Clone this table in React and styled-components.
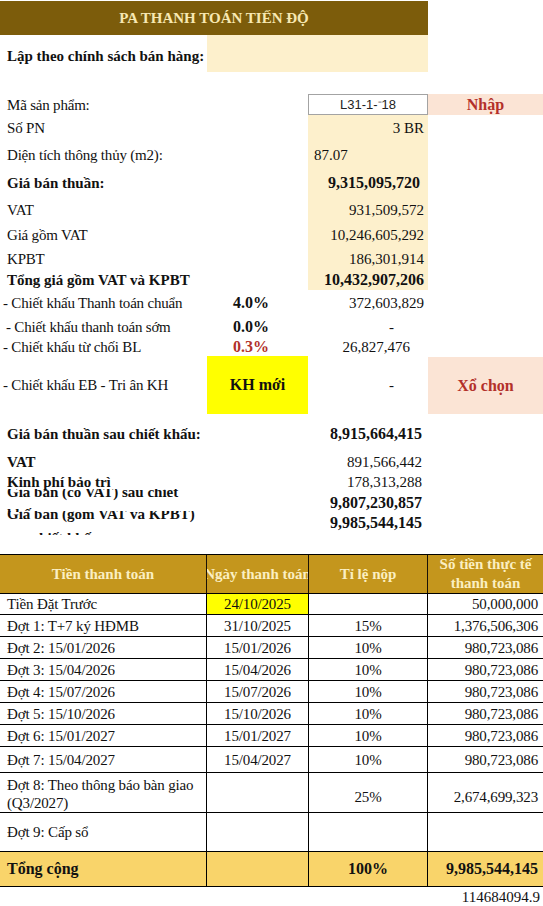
import React from "react";
import styled, { createGlobalStyle } from "styled-components";

const Global = createGlobalStyle`
  html, body { margin: 0; padding: 0; background: #ffffff; }
  body { font-family: "Liberation Serif", "Times New Roman", serif; color: #111; }
`;

const COLS = "207px 101px 120px 115px";
const TCOLS = "207px 102px 119px 115px";

const Sheet = styled.div`
  width: 543px;
  padding-top: 1px;
  font-size: 15px;
  line-height: 18px;
`;

const TitleBar = styled.div`
  width: 428px;
  height: 34px;
  background: #7c5c0b;
  color: #f7e8b2;
  font-weight: bold;
  font-size: 15px;
  display: flex;
  align-items: center;
  justify-content: center;
`;

const PolicyRow = styled.div`
  display: grid;
  grid-template-columns: 207px 221px;
  height: 37px;
  margin-bottom: 22px;
`;

const PolicyLabel = styled.div`
  font-weight: bold;
  font-size: 15px;
  padding-left: 7px;
  display: flex;
  align-items: center;
  padding-top: 4px;
  white-space: nowrap;
`;

const PolicyInput = styled.div`
  background: #fdf0cc;
`;

const Row = styled.div`
  display: grid;
  grid-template-columns: ${COLS};
  height: ${(p) => p.$h}px;
  margin-top: ${(p) => p.$mt || 0}px;
`;

const Label = styled.div`
  display: flex;
  align-items: center;
  padding-left: ${(p) => (p.$indent != null ? p.$indent : 7)}px;
  font-weight: ${(p) => (p.$bold ? "bold" : "normal")};
  white-space: nowrap;
  letter-spacing: ${(p) => (p.$bold ? "0" : "-0.2px")};
`;

const ClipLabel = styled.div`
  overflow: hidden;
  padding-left: 7px;
  font-weight: bold;
`;

const ClipText = styled.div`
  margin-top: ${(p) => p.$shift}px;
  line-height: ${(p) => p.$lh}px;
  width: 200px;
`;

const Pct = styled.div`
  display: flex;
  align-items: center;
  padding-left: 26px;
  font-weight: bold;
  font-size: 16px;
  color: ${(p) => (p.$red ? "#b2302a" : "#111")};
`;

const Promo = styled.div`
  background: #ffff00;
  display: flex;
  align-items: center;
  justify-content: center;
  font-weight: bold;
  font-size: 16px;
`;

const Value = styled.div`
  display: flex;
  align-items: center;
  justify-content: ${(p) => (p.$left ? "flex-start" : "flex-end")};
  padding: ${(p) => (p.$left ? "0 0 0 6px" : `0 ${p.$pr != null ? p.$pr : 4}px 0 0`)};
  padding-top: ${(p) => p.$dy || 0}px;
  background: ${(p) => (p.$cream ? "#fdf0cc" : "transparent")};
  font-weight: ${(p) => (p.$bold ? "bold" : "normal")};
  font-size: ${(p) => (p.$bold ? 16 : 15)}px;
`;

const CodeBox = styled.div`
  background: #fff;
  border: 1px solid #a3a3a3;
  display: flex;
  align-items: center;
  justify-content: center;
  font-family: "Liberation Sans", Arial, sans-serif;
  font-size: 13px;
  color: #222;
`;

const Smudge = styled.span`
  color: #9a9a9a;
  font-size: 10px;
  letter-spacing: -1px;
`;

const Action = styled.div`
  background: #fbe4d5;
  color: #b3302a;
  font-weight: bold;
  font-size: 16px;
  display: flex;
  align-items: center;
  justify-content: center;
  margin-top: ${(p) => p.$mt || 0}px;
`;

const Table = styled.div`
  margin-top: 19px;
  width: 543px;
`;

const TRow = styled.div`
  display: grid;
  grid-template-columns: ${TCOLS};
  height: ${(p) => p.$h}px;
  box-sizing: border-box;
  border-bottom: 1px solid #000;
  border-top: ${(p) => (p.$top ? "1px solid #000" : "none")};
  background: ${(p) => p.$bg || "transparent"};
`;

const TH = styled.div`
  border-right: ${(p) => (p.$last ? "none" : "1px solid #1a1206")};
  color: #fbefc2;
  font-weight: bold;
  font-size: 15px;
  overflow: hidden;
  display: flex;
  align-items: center;
  justify-content: center;
  text-align: center;
  line-height: 19px;
  white-space: ${(p) => (p.$nowrap ? "nowrap" : "normal")};
`;

const TD = styled.div`
  border-right: ${(p) => (p.$last ? "none" : "1px solid #000")};
  overflow: hidden;
  display: flex;
  flex-direction: column;
  justify-content: ${(p) => p.$valign || "center"};
  align-items: ${(p) =>
    p.$align === "right" ? "flex-end" : p.$align === "center" ? "center" : "flex-start"};
  padding: 0 ${(p) => (p.$align === "right" ? 5 : 0)}px 0 ${(p) => (p.$align === "left" || !p.$align ? 7 : 0)}px;
  padding-bottom: ${(p) => p.$pb || 0}px;
  padding-top: ${(p) => p.$ptop || 0}px;
  background: ${(p) => p.$bg || "transparent"};
  font-weight: ${(p) => (p.$bold ? "bold" : "normal")};
  font-size: ${(p) => (p.$bold ? 16 : 15)}px;
  letter-spacing: ${(p) => (p.$bold ? "0" : "-0.15px")};
  white-space: nowrap;
  line-height: 18px;
`;

const Footer = styled.div`
  height: 19px;
  display: flex;
  align-items: center;
  justify-content: flex-end;
  padding-right: 3px;
`;

const schedule = [
  { label: "Đợt 1: T+7 ký HĐMB", date: "31/10/2025", pct: "15%", amt: "1,376,506,306", h: 22 },
  { label: "Đợt 2: 15/01/2026", date: "15/01/2026", pct: "10%", amt: "980,723,086", h: 22 },
  { label: "Đợt 3: 15/04/2026", date: "15/04/2026", pct: "10%", amt: "980,723,086", h: 22 },
  { label: "Đợt 4: 15/07/2026", date: "15/07/2026", pct: "10%", amt: "980,723,086", h: 22 },
  { label: "Đợt 5: 15/10/2026", date: "15/10/2026", pct: "10%", amt: "980,723,086", h: 22 },
  { label: "Đợt 6: 15/01/2027", date: "15/01/2027", pct: "10%", amt: "980,723,086", h: 22 },
  { label: "Đợt 7: 15/04/2027", date: "15/04/2027", pct: "10%", amt: "980,723,086", h: 26 },
];

export default function App() {
  return (
    <>
      <Global />
      <Sheet>
        <TitleBar>PA THANH TOÁN TIẾN ĐỘ</TitleBar>
        <PolicyRow>
          <PolicyLabel>Lập theo chính sách bán hàng:</PolicyLabel>
          <PolicyInput />
        </PolicyRow>

        <Row $h={21}>
          <Label>Mã sản phẩm:</Label>
          <div />
          <CodeBox>
            L31-1-<Smudge>⁼⁻</Smudge>18
          </CodeBox>
          <Action>Nhập</Action>
        </Row>
        <Row $h={26}>
          <Label>Số PN</Label>
          <div />
          <Value $cream>3 BR</Value>
        </Row>
        <Row $h={27}>
          <Label>Diện tích thông thủy (m2):</Label>
          <div />
          <Value $cream $left>87.07</Value>
        </Row>
        <Row $h={29}>
          <Label $bold>Giá bán thuần:</Label>
          <div />
          <Value $cream $bold $pr={8}>9,315,095,720</Value>
        </Row>
        <Row $h={25}>
          <Label>VAT</Label>
          <div />
          <Value $cream>931,509,572</Value>
        </Row>
        <Row $h={26}>
          <Label>Giá gồm VAT</Label>
          <div />
          <Value $cream>10,246,605,292</Value>
        </Row>
        <Row $h={22}>
          <Label>KPBT</Label>
          <div />
          <Value $cream>186,301,914</Value>
        </Row>
        <Row $h={20}>
          <Label $bold>Tổng giá gồm VAT và KPBT</Label>
          <div />
          <Value $cream $bold>10,432,907,206</Value>
        </Row>
        <Row $h={25}>
          <Label $indent={3}>- Chiết khấu Thanh toán chuẩn</Label>
          <Pct>4.0%</Pct>
          <Value>372,603,829</Value>
        </Row>
        <Row $h={23}>
          <Label $indent={6}>- Chiết khấu thanh toán sớm</Label>
          <Pct>0.0%</Pct>
          <Value $pr={34}>-</Value>
        </Row>
        <Row $h={18}>
          <Label $indent={3}>- Chiết khấu từ chối BL</Label>
          <Pct $red>0.3%</Pct>
          <Value $pr={18}>26,827,476</Value>
        </Row>
        <Row $h={58}>
          <Label $indent={3}>- Chiết khấu EB - Tri ân KH</Label>
          <Promo>KH mới</Promo>
          <Value $pr={34}>-</Value>
          <Action $mt={1}>Xổ chọn</Action>
        </Row>

        <Row $h={27} $mt={6}>
          <Label $bold>Giá bán thuần sau chiết khấu:</Label>
          <div />
          <Value $bold $pr={6}>8,915,664,415</Value>
        </Row>
        <Row $h={23} $mt={3}>
          <Label $bold>VAT</Label>
          <div />
          <Value $pr={6}>891,566,442</Value>
        </Row>
        <Row $h={16}>
          <Label $bold>Kinh phí bảo trì</Label>
          <div />
          <Value $pr={6}>178,313,288</Value>
        </Row>
        <Row $h={22}>
          <ClipLabel>
            <ClipText $shift={-8} $lh={22}>Giá bán (có VAT) sau chiết khấu</ClipText>
          </ClipLabel>
          <div />
          <Value $bold $pr={6} $dy={5}>9,807,230,857</Value>
        </Row>
        <Row $h={24}>
          <ClipLabel>
            <ClipText $shift={-9} $lh={24}>Giá bán (gồm VAT và KPBT) sau chiết khấu</ClipText>
          </ClipLabel>
          <div />
          <Value $bold $pr={6}>9,985,544,145</Value>
        </Row>

        <Table>
          <TRow $h={40} $top $bg="#c4961d">
            <TH>Tiền thanh toán</TH>
            <TH $nowrap>Ngày thanh toán</TH>
            <TH>Tỉ lệ nộp</TH>
            <TH $last>Số tiền thực tế thanh toán</TH>
          </TRow>
          <TRow $h={21}>
            <TD>Tiền Đặt Trước</TD>
            <TD $align="center" $bg="#ffff00">24/10/2025</TD>
            <TD $align="center" />
            <TD $align="right" $last>50,000,000</TD>
          </TRow>
          {schedule.map((r) => (
            <TRow key={r.label} $h={r.h}>
              <TD>{r.label}</TD>
              <TD $align="center">{r.date}</TD>
              <TD $align="center">{r.pct}</TD>
              <TD $align="right" $last>{r.amt}</TD>
            </TRow>
          ))}
          <TRow $h={40}>
            <TD $valign="flex-start" $ptop={3}>
              <span>Đợt 8: Theo thông báo bàn giao</span>
              <span>(Q3/2027)</span>
            </TD>
            <TD $align="center" />
            <TD $align="center" $valign="flex-end" $pb={6}>25%</TD>
            <TD $align="right" $valign="flex-end" $pb={6} $last>2,674,699,323</TD>
          </TRow>
          <TRow $h={39}>
            <TD>Đợt 9: Cấp sổ</TD>
            <TD $align="center" />
            <TD $align="center" />
            <TD $align="right" $last />
          </TRow>
          <TRow $h={35} $bg="#f9d46a">
            <TD $bold>Tổng cộng</TD>
            <TD $align="center" />
            <TD $align="center" $bold>100%</TD>
            <TD $align="right" $bold $last>9,985,544,145</TD>
          </TRow>
        </Table>
        <Footer>114684094.9</Footer>
      </Sheet>
    </>
  );
}
